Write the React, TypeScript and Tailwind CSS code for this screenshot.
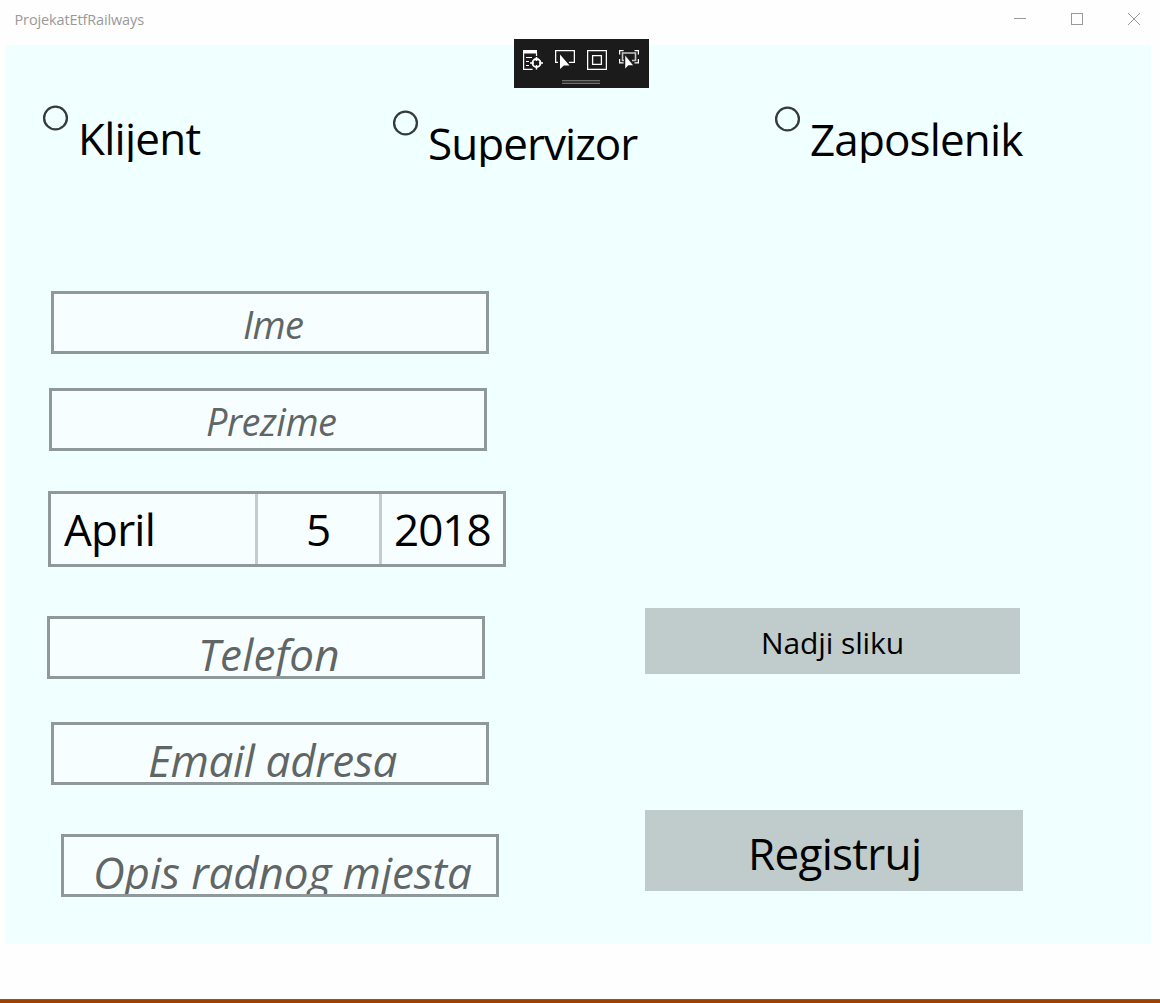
import type { ReactNode } from "react";

function Radio({ label, className }: { label: string; className: string }) {
  return (
    <label className={`flex shrink-0 items-start ${className}`}>
      <svg className="size-[25px] shrink-0 overflow-visible" viewBox="0 0 25 25" fill="none" stroke="#343b3b">
        <circle cx="12.500" cy="13" r="11.400" strokeWidth="2.300" />
      </svg>
      <span className="mt-[3px] h-[54px] overflow-hidden pr-2 pl-2.5 text-[44px] leading-[60px] whitespace-nowrap text-black">
        {label}
      </span>
    </label>
  );
}

function Field({ className, children }: { className: string; children: ReactNode }) {
  return (
    <div
      className={`h-[63px] w-[438px] overflow-hidden border-[3px] border-[#909999] bg-[#f7feff] whitespace-nowrap text-[#606666] italic ${className}`}
    >
      {children}
    </div>
  );
}

function TitleBar() {
  return (
    <header className="flex h-[45px] shrink-0 items-start justify-between pl-[14.5px] text-[#999999]">
      <h1 className="pt-2.5 text-[14.5px] leading-5 tracking-[-0.13px]">ProjekatEtfRailways</h1>
      <div className="flex gap-[43px] pt-3 pr-[19px]">
        <svg className="size-[14px]" viewBox="0 0 14 14" fill="none" stroke="currentColor" shapeRendering="crispEdges">
          <path d="M1 6.5h12" />
        </svg>
        <svg className="size-[14px]" viewBox="0 0 14 14" fill="none" stroke="currentColor" shapeRendering="crispEdges">
          <path d="M1.5 1.5h11v11h-11z" />
        </svg>
        <svg className="size-[14px]" viewBox="0 0 14 14" fill="none" stroke="currentColor">
          <path d="M1 1l12 12M13 1L1 13" />
        </svg>
      </div>
    </header>
  );
}

function DebugToolbar() {
  return (
    <div className="absolute top-[39px] left-[514px] flex h-[49px] w-[135px] flex-col items-start bg-[#1b1b1b] pt-[11px] pl-[9px] text-white">
      <div className="flex gap-3">
        <svg className="size-5" viewBox="0 0 20 20" fill="none" stroke="currentColor">
          <path d="M0 0h14v3.5H0z" fill="currentColor" stroke="none" />
          <path d="M.6 3v16.400h9M13.500 3v3M3 7.500h6M3 11.500h3M3 15.500h3" strokeWidth="1.200" />
          <circle cx="13.500" cy="13" r="4" strokeWidth="1.800" />
          <path d="M13.500 7v4M13.500 15v4.500M7 13h4M16 13h4" strokeWidth="1.500" />
        </svg>
        <svg className="size-5" viewBox="0 0 20 20" fill="none" stroke="currentColor">
          <path d="M3 12.400H.6V.6h18.800v11.800H14" strokeWidth="1.300" />
          <path d="M5 4.500v14.500l3.800-3.500H14.500z" fill="currentColor" stroke="none" />
        </svg>
        <svg className="size-5" viewBox="0 0 20 20" fill="none" stroke="currentColor">
          <path d="M.6.6h18.800v18.800H.6zM5.600 5.600h8.800v8.800H5.600z" strokeWidth="1.300" />
        </svg>
        <svg className="size-5" viewBox="0 0 20 20" fill="none" stroke="currentColor">
          <path d="M.6 4.500V.6h4M15.500.6h3.900v4M.6 9v3.900h4M15.500 12.900h3.900V9" strokeWidth="1.300" />
          <path d="M5 10.500H3.500v-7.500h13v7.500H13" stroke="#c8c8c8" strokeWidth="1.600" />
          <path d="M6 5v14l3.300-3.500H14.500z" fill="currentColor" stroke="#1b1b1b" strokeWidth=".5" />
        </svg>
      </div>
      <div className="mt-2.5 ml-[39px] h-1 w-[38px] border-y border-[#707070] bg-[#343434]" />
    </div>
  );
}

export default function App() {
  return (
    <div className="relative flex h-[1003px] w-[1160px] flex-col overflow-hidden bg-[#fefefe] font-['Open_Sans','Noto_Sans',sans-serif]">
      <TitleBar />
      <main className="mr-[9px] ml-[5px] h-[899px] shrink-0 bg-[#f0ffff]">
        <div className="flex h-[246px] items-start pl-[38px]">
          <Radio label="Klijent" className="mt-[60px] w-[350px] tracking-[-0.75px]" />
          <Radio label="Supervizor" className="mt-[65px] w-[382px] tracking-[-0.95px]" />
          <Radio label="Zaposlenik" className="mt-[61px] tracking-[-0.85px]" />
        </div>
        <div className="flex items-start">
          <div className="w-[640px]">
            <Field className="ml-[46px] pt-1 pl-[189px] text-[38px] leading-[52px] tracking-[-0.7px]">Ime</Field>
            <Field className="mt-[34px] ml-[44px] pt-1 pl-[154px] text-[38px] leading-[52px] tracking-[-0.5px]">Prezime</Field>
            <div className="mt-10 ml-[43px] flex h-[76px] w-[458px] border-[3px] border-[#909999] bg-[#f7feff] text-[44px] leading-[60px] text-black">
              <div className="w-[207px] border-r-[3px] border-[#c4cccd] pt-[5px] pl-[13px] tracking-[-0.8px]">April</div>
              <div className="w-[124px] border-r-[3px] border-[#c4cccd] pt-[5px] pl-12">5</div>
              <div className="pt-[5px] pl-3 tracking-[-1px]">2018</div>
            </div>
            <Field className="mt-[49px] ml-[42px] pt-[5px] pl-[148px] text-[44px] leading-[60px] tracking-[0.15px]">Telefon</Field>
            <Field className="mt-[43px] ml-[46px] pt-[5px] pl-[94px] text-[44px] leading-[60px] tracking-[-0.33px]">Email adresa</Field>
            <Field className="mt-[49px] ml-[56px] pt-[5px] pl-[29px] text-[44px] leading-[60px] tracking-[-0.09px]">Opis radnog mjesta</Field>
          </div>
          <div className="flex flex-col items-start pt-[317px] text-black">
            <button className="flex h-[66px] w-[375px] items-start bg-[#c0cccc] pt-[15px] pl-[116px] text-[30px] leading-10 tracking-[-0.1px]">Nadji sliku</button>
            <button className="mt-[136px] flex h-[81px] w-[378px] items-start bg-[#c0cccc] pt-[13px] pl-[103px] text-[44px] leading-[60px] tracking-[-0.7px]">Registruj</button>
          </div>
        </div>
      </main>
      <footer className="mt-auto h-1 border-t border-[#8c5530] bg-[#a04000]" />
      <DebugToolbar />
    </div>
  );
}
